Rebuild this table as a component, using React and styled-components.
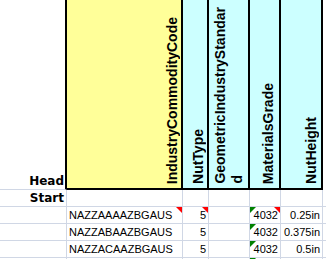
import React from 'react';
import styled, { createGlobalStyle } from 'styled-components';

const Global = createGlobalStyle`
  html, body { margin: 0; padding: 0; background: #ffffff; }
  body { width: 326px; height: 259px; overflow: hidden; }
`;

const GRID = '#d0d7e5';

const Sheet = styled.div`
  display: grid;
  grid-template-columns: 67px 116px 26px 41px 31px 42px 1fr;
  grid-template-rows: 190px;
  grid-auto-rows: 17px;
  width: 326px;
`;

const LabelHead = styled.div`
  box-sizing: border-box;
  border-right: 2px solid #000;
  border-bottom: 1px solid ${GRID};
  display: flex;
  align-items: flex-end;
  justify-content: flex-end;
  padding: 0 1px 1px 0;
  font: bold 12px/14px "DejaVu Sans", Verdana, sans-serif;
  color: #000;
`;

const HeadCell = styled.div`
  box-sizing: border-box;
  background: ${(p) => p.$bg};
  border-right: 2px solid #000;
  border-bottom: 2px solid #000;
  display: flex;
  align-items: flex-end;
  justify-content: flex-end;
  padding: 0 ${(p) => p.$pr || 0}px 4px 0;
  overflow: hidden;
`;

const BlankHead = styled.div``;

const VText = styled.span`
  writing-mode: vertical-rl;
  transform: rotate(180deg);
  font: bold 14px/17px "Liberation Sans", Arial, sans-serif;
  color: #000;
  white-space: nowrap;
`;

const Label = styled.div`
  box-sizing: border-box;
  border-right: 1px solid ${GRID};
  border-bottom: 1px solid ${GRID};
  padding-right: 2px;
  text-align: right;
  font: bold 12px/16px "DejaVu Sans", Verdana, sans-serif;
  color: #000;
  white-space: nowrap;
`;

const Cell = styled.div`
  position: relative;
  box-sizing: border-box;
  border-right: ${(p) => (p.$last ? 'none' : `1px solid ${GRID}`)};
  border-bottom: 1px solid ${GRID};
  padding: 0 2px;
  text-align: ${(p) => p.$align || 'left'};
  font: 11px/16px "Liberation Sans", Arial, sans-serif;
  color: #000;
  white-space: nowrap;
  overflow: hidden;
`;

const Mark = styled.span`
  position: absolute;
  top: 0;
  ${(p) => (p.$side === 'left' ? 'left: 0;' : 'right: 0;')}
  width: 6px;
  height: 6px;
  background: ${(p) => (p.$side === 'left' ? '#008000' : '#ff0000')};
  clip-path: ${(p) =>
    p.$side === 'left'
      ? 'polygon(0 0, 100% 0, 0 100%)'
      : 'polygon(0 0, 100% 0, 100% 100%)'};
`;

const rows = [
  { id: 1, code: 'NAZZAAAAZBGAUS', type: '5', grade: '4032', height: '0.25in', notes: true },
  { id: 2, code: 'NAZZABAAZBGAUS', type: '5', grade: '4032', height: '0.375in' },
  { id: 3, code: 'NAZZACAAZBGAUS', type: '5', grade: '4032', height: '0.5in' },
  { id: 4, code: '', type: '', grade: '', height: '' },
];

export default function App() {
  return (
    <>
      <Global />
      <Sheet>
        <LabelHead>Head</LabelHead>
        <HeadCell $bg="#ffff99">
          <VText>IndustryCommodityCode</VText>
        </HeadCell>
        <HeadCell $bg="#ccffff">
          <VText>NutType</VText>
        </HeadCell>
        <HeadCell $bg="#ccffff" $pr={2}>
          <VText>
            GeometricIndustryStandar
            <br />d
          </VText>
        </HeadCell>
        <HeadCell $bg="#ccffff" $pr={2}>
          <VText>MaterialsGrade</VText>
        </HeadCell>
        <HeadCell $bg="#ccffff" $pr={1}>
          <VText>NutHeight</VText>
        </HeadCell>
        <BlankHead />

        <Label>Start</Label>
        <Cell />
        <Cell />
        <Cell />
        <Cell />
        <Cell />
        <Cell $last />

        {rows.map((r) => (
          <React.Fragment key={r.id}>
            <Cell />
            <Cell>
              {r.code}
              {r.notes && <Mark $side="right" />}
            </Cell>
            <Cell $align="right">
              {r.type}
              {r.notes && <Mark $side="right" />}
            </Cell>
            <Cell />
            <Cell $align="right">
              <Mark $side="left" />
              {r.grade}
              {r.notes && <Mark $side="right" />}
            </Cell>
            <Cell $align="right">{r.height}</Cell>
            <Cell $last />
          </React.Fragment>
        ))}
      </Sheet>
    </>
  );
}
